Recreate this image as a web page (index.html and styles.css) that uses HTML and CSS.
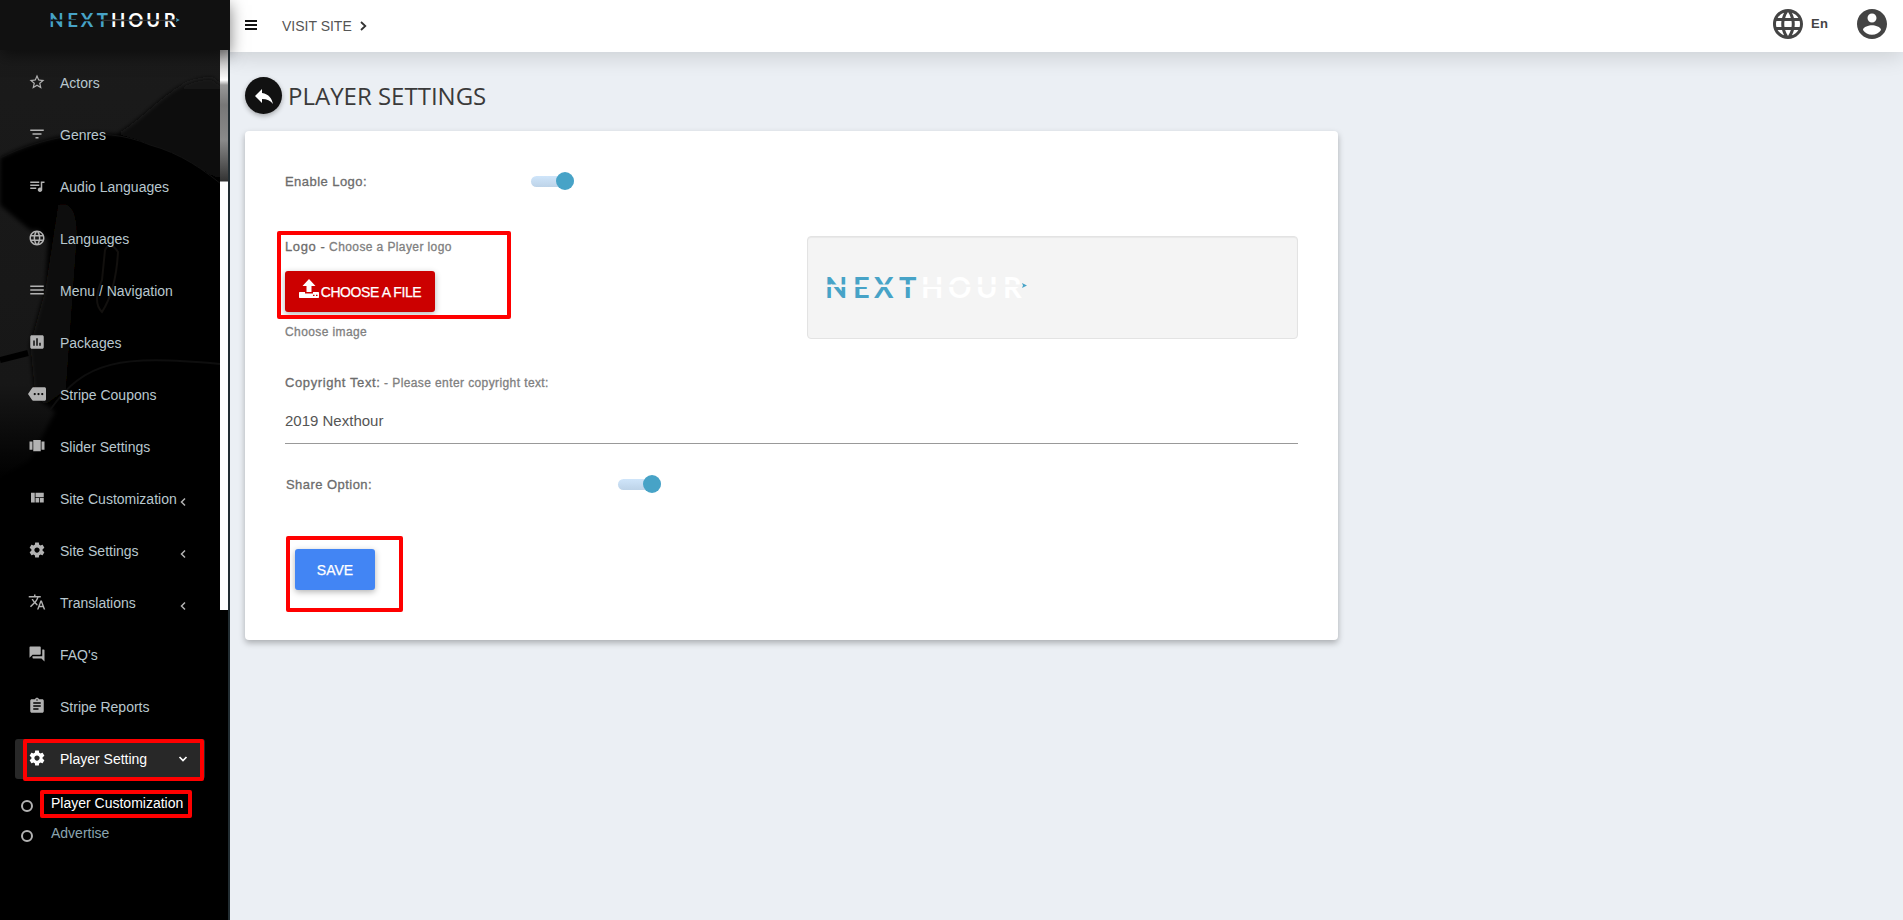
FILE: index.html
```html
<!DOCTYPE html>
<html lang="en">
<head>
<meta charset="utf-8">
<title>Player Settings</title>
<link rel="stylesheet" href="styles.css">
</head>
<body>
<div class="app">
  <aside class="sidebar">
    <svg class="backdrop" viewBox="0 0 228 920" preserveAspectRatio="none">
      <defs>
        <linearGradient id="fade" x1="0" y1="0" x2="0" y2="1"><stop offset="0" stop-color="#1b1b1b"/><stop offset=".8" stop-color="#171717"/><stop offset="1" stop-color="#000"/></linearGradient>
        <linearGradient id="crown" x1="0" y1="0" x2="0" y2="1"><stop offset="0" stop-color="#131313"/><stop offset="1" stop-color="#050505"/></linearGradient>
        <filter id="soft"><feGaussianBlur stdDeviation="2"/></filter>
      </defs>
      <rect width="228" height="920" fill="#000"/>
      <rect width="228" height="480" fill="url(#fade)"/>
      <g filter="url(#soft)">
        <path d="M120 135C155 118 172 78 212 78L240 100V520H0V478L30 460 55 412 35 395 30 345 45 290 48 240 30 222H150Z" fill="#040404"/>
        <path d="M110 138C150 118 170 78 212 78L240 100V190L160 150Z" fill="url(#crown)"/>
        <path d="M0 158C40 138 100 120 150 145C180 153 205 170 228 190V230H30L0 205Z" fill="#040404"/>
        <path d="M58 205C72 200 80 215 76 250L66 390 45 405 35 395 30 345 45 290Z" fill="#090807"/>
      </g>
      <path d="M0 158C40 138 100 123 150 145C180 153 205 170 228 190" fill="none" stroke="#121212"/>
      <path d="M50 410C85 360 120 355 220 364" fill="none" stroke="#0e0e0e" stroke-width="2"/>
      <path d="M105 250Q110 240 118 252Q116 290 102 312Q92 302 102 280Z" fill="none" stroke="#12100e" stroke-width="2"/>
      <path d="M0 360L28 353" stroke="#000" stroke-width="6"/>
    </svg>
    <div class="scrollbar"></div>
    <div class="brand">
      <svg width="135" height="26" viewBox="-4 -6 210 40">
        <g class="logo-text"><text class="blue" x="-2 26 47 72" y="24">NEXT</text><text class="white" x="94 121 149 176" y="24">HOUR</text></g>
        <path d="M0 13H194" stroke="#111" stroke-width="2.4"/><path d="M80 13H194" stroke="#555" stroke-width="1"/>
        <path d="M195 9.500l6 3-6 3 1-3z" fill="#47a3c7"/>
      </svg>
    </div>
    <nav class="menu">
      <a class="item"><svg viewBox="0 0 24 24"><path d="M22 9.24l-7.19-.62L12 2 9.19 8.63 2 9.24l5.46 4.73L5.82 21 12 17.27 18.18 21l-1.63-7.03L22 9.24zM12 15.4l-3.76 2.27 1-4.28-3.32-2.88 4.38-.38L12 6.1l1.71 4.04 4.38.38-3.32 2.88 1 4.28L12 15.4z"/></svg>Actors</a>
      <a class="item"><svg viewBox="0 0 24 24"><path d="M10 18h4v-2h-4v2zM3 6v2h18V6H3zm3 7h12v-2H6v2z"/></svg>Genres</a>
      <a class="item"><svg viewBox="0 0 24 24"><path d="M15 6H3v2h12V6zm0 4H3v2h12v-2zM3 16h8v-2H3v2zM17 6v8.18c-.31-.11-.65-.18-1-.18-1.66 0-3 1.34-3 3s1.340 3 3 3 3-1.340 3-3V8h3V6h-5z"/></svg>Audio Languages</a>
      <a class="item"><svg viewBox="0 0 24 24"><use href="#globe"/></svg>Languages</a>
      <a class="item"><svg viewBox="0 0 24 24"><path d="M3 18h18v-2H3v2zm0-5h18v-2H3v2zm0-7v2h18V6H3z"/></svg>Menu / Navigation</a>
      <a class="item"><svg viewBox="0 0 24 24"><path d="M19 3H5c-1.100 0-2 .9-2 2v14c0 1.100.9 2 2 2h14c1.100 0 2-.9 2-2V5c0-1.100-.9-2-2-2zM9 17H7v-7h2v7zm4 0h-2V7h2v10zm4 0h-2v-4h2v4z"/></svg>Packages</a>
      <a class="item"><svg viewBox="0 0 24 24"><path d="M22 3H7c-.69 0-1.230.35-1.590.88L0 12l5.410 8.110c.36.53.97.89 1.660.89H22c1.100 0 2-.9 2-2V5c0-1.100-.9-2-2-2zM9 13.500c-.83 0-1.500-.67-1.500-1.500s.67-1.500 1.500-1.500 1.500.67 1.500 1.500-.67 1.500-1.500 1.500zm5 0c-.83 0-1.500-.67-1.500-1.500s.67-1.500 1.500-1.500 1.500.67 1.500 1.500-.67 1.500-1.500 1.500zm5 0c-.83 0-1.500-.67-1.500-1.500s.67-1.500 1.500-1.500 1.500.67 1.500 1.500-.67 1.500-1.500 1.500z"/></svg>Stripe Coupons</a>
      <a class="item"><svg viewBox="0 0 24 24"><path d="M7 19h10V4H7v15zm-5-2h4V6H2v11zM18 6v11h4V6h-4z"/></svg>Slider Settings</a>
      <a class="item"><svg viewBox="0 0 24 24"><path d="M10 18h5v-6h-5v6zm-6 0h5V5H4v13zm12 0h5v-6h-5v6zM10 5v6h11V5H10z"/></svg>Site Customization<svg class="arrow" viewBox="0 0 8 10"><path d="M6 1.500L2.500 5 6 8.500"/></svg></a>
      <a class="item"><svg viewBox="0 0 24 24"><use href="#gear"/></svg>Site Settings<svg class="arrow" viewBox="0 0 8 10"><path d="M6 1.500L2.500 5 6 8.500"/></svg></a>
      <a class="item"><svg viewBox="0 0 24 24"><path d="M12.870 15.070l-2.540-2.510.03-.03c1.740-1.940 2.980-4.170 3.710-6.530H17V4h-7V2H8v2H1v1.990h11.170C11.500 7.920 10.440 9.750 9 11.350 8.070 10.320 7.300 9.190 6.690 8h-2c.73 1.630 1.730 3.170 2.980 4.560l-5.090 5.020L4 19l5-5 3.110 3.110.76-2.040zM18.500 10h-2L12 22h2l1.120-3h4.750L21 22h2l-4.500-12zm-2.620 7l1.620-4.330L19.120 17h-3.240z"/></svg>Translations<svg class="arrow" viewBox="0 0 8 10"><path d="M6 1.500L2.500 5 6 8.500"/></svg></a>
      <a class="item"><svg viewBox="0 0 24 24"><path d="M21 6h-2v9H6v2c0 .55.45 1 1 1h11l4 4V7c0-.55-.45-1-1-1zm-4 6V3c0-.55-.45-1-1-1H3c-.55 0-1 .45-1 1v14l4-4h10c.55 0 1-.45 1-1z"/></svg>FAQ's</a>
      <a class="item"><svg viewBox="0 0 24 24"><path d="M19 3h-4.180C14.400 1.840 13.300 1 12 1c-1.300 0-2.400.84-2.820 2H5c-1.100 0-2 .9-2 2v14c0 1.100.9 2 2 2h14c1.100 0 2-.9 2-2V5c0-1.100-.9-2-2-2zm-7 0c.55 0 1 .45 1 1s-.45 1-1 1-1-.45-1-1 .45-1 1-1zm2 14H7v-2h7v2zm3-4H7v-2h10v2zm0-4H7V7h10v2z"/></svg>Stripe Reports</a>
      <a class="item active"><svg viewBox="0 0 24 24"><use href="#gear"/></svg>Player Setting<svg class="arrow down" viewBox="0 0 10 8"><path d="M1.500 2L5 5.500 8.500 2"/></svg></a>
    </nav>
    <div class="submenu">
      <a class="sub current"><i></i>Player Customization</a>
      <a class="sub"><i></i>Advertise</a>
    </div>
    <div class="mark mark-nav"></div>
    <div class="mark mark-sub"></div>
  </aside>

  <div class="page">
    <header class="topbar">
      <svg class="burger" viewBox="0 0 12 10"><path d="M0 1h12M0 5h12M0 9h12"/></svg>
      <a class="visit">VISIT SITE</a>
      <svg class="visit-arrow" viewBox="0 0 7 10"><path d="M1 1l4.300 4L1 9"/></svg>
      <div class="tools">
        <svg class="tool" viewBox="0 0 24 24"><path id="globe" d="M11.990 2C6.470 2 2 6.480 2 12s4.470 10 9.990 10C17.520 22 22 17.520 22 12S17.520 2 11.990 2zm6.930 6h-2.950c-.32-1.250-.78-2.450-1.380-3.560 1.840.63 3.370 1.910 4.330 3.560zM12 4.040c.83 1.200 1.480 2.530 1.910 3.960h-3.820c.43-1.430 1.080-2.760 1.910-3.960zM4.260 14C4.100 13.360 4 12.690 4 12s.1-1.360.26-2h3.380c-.08.66-.14 1.320-.14 2s.06 1.340.14 2H4.260zm.82 2h2.950c.32 1.250.78 2.450 1.380 3.560-1.840-.63-3.370-1.900-4.330-3.560zm2.950-8H5.080c.96-1.660 2.490-2.930 4.330-3.560C8.810 5.550 8.350 6.750 8.030 8zM12 19.960c-.83-1.200-1.480-2.530-1.910-3.960h3.820c-.43 1.430-1.080 2.760-1.910 3.960zM14.340 14H9.660c-.09-.66-.16-1.320-.16-2s.07-1.350.16-2h4.680c.09.65.16 1.320.16 2s-.07 1.340-.16 2zm.25 5.560c.6-1.110 1.060-2.310 1.380-3.560h2.950c-.96 1.650-2.490 2.930-4.330 3.560zM16.360 14c.08-.66.14-1.320.14-2s-.06-1.340-.14-2h3.380c.16.64.26 1.310.26 2s-.1 1.360-.26 2h-3.380z"/></svg>
        <span class="lang">En</span>
        <svg class="tool" viewBox="0 0 24 24"><path d="M12 2C6.480 2 2 6.480 2 12s4.480 10 10 10 10-4.480 10-10S17.520 2 12 2zm0 3c1.660 0 3 1.340 3 3s-1.340 3-3 3-3-1.340-3-3 1.340-3 3-3zm0 14.200c-2.500 0-4.710-1.280-6-3.220.03-1.990 4-3.080 6-3.080 1.990 0 5.970 1.090 6 3.080-1.290 1.940-3.500 3.220-6 3.220z"/></svg>
      </div>
      <svg class="defs" viewBox="0 0 24 24"><defs><path id="gear" d="M19.430 12.980c.04-.32.07-.64.07-.98s-.03-.66-.07-.98l2.110-1.650c.19-.15.24-.42.12-.64l-2-3.460c-.12-.22-.39-.3-.61-.22l-2.490 1c-.52-.4-1.080-.73-1.690-.98l-.38-2.650C14.460 2.180 14.250 2 14 2h-4c-.25 0-.46.18-.49.42l-.38 2.650c-.61.25-1.170.59-1.690.98l-2.490-1c-.23-.09-.49 0-.61.22l-2 3.460c-.13.22-.07.49.12.64l2.110 1.650c-.04.32-.07.65-.07.98s.03.66.07.98l-2.110 1.650c-.19.15-.24.42-.12.64l2 3.460c.12.22.39.3.61.22l2.490-1c.52.4 1.080.73 1.690.98l.38 2.650c.03.24.24.42.49.42h4c.25 0 .46-.18.49-.42l.38-2.650c.61-.25 1.170-.59 1.690-.98l2.490 1c.23.09.49 0 .61-.22l2-3.460c.12-.22.07-.49-.12-.64l-2.110-1.650zM12 15.500c-1.930 0-3.500-1.570-3.500-3.500s1.570-3.500 3.500-3.500 3.500 1.570 3.500 3.500-1.570 3.500-3.500 3.500z"/></defs></svg>
    </header>
    <main>
      <div class="heading">
        <a class="back"><svg viewBox="0 0 24 24"><path d="M10 9V5l-7 7 7 7v-4.100c5 0 8.500 1.600 11 5.100-1-5-4-10-11-11z"/></svg></a>
        <h1>PLAYER SETTINGS</h1>
      </div>
      <section class="card">
        <div class="row enable"><label>Enable Logo:</label><span class="switch"></span></div>
        <div class="row upload">
          <div class="picker">
            <p class="caption"><b>Logo -</b> <small>Choose a Player logo</small></p>
            <button class="btn choose"><svg viewBox="0 0 20 20"><path d="M10 0l6.500 7H12.500v6h-5V7h-4z"/><path d="M.7 13H6v1.500h8V13h5.300q.7 0 .7.700v4.600q0 .7-.7.700H.7q-.7 0-.7-.7v-4.600q0-.7.7-.7z"/><path d="M14 16.300h1.500M17 16.300h1.500" stroke="#c00" stroke-width="1.300"/></svg>CHOOSE A FILE</button>
            <p class="hint">Choose image</p>
          </div>
          <div class="well">
            <svg width="210" height="40" viewBox="-4 -6 210 40">
              <g class="logo-text"><text class="blue" x="-2 26 47 72" y="23">NEXT</text><text class="white" x="94 121 149 176" y="23">HOUR</text></g>
              <path d="M0 10.800H194" stroke="#f4f4f4" stroke-width="2.400"/>
              <path d="M195 8l5 2.500-5 2.500 1-2.500z" fill="#47a3c7"/>
            </svg>
          </div>
        </div>
        <div class="row copyright">
          <p class="caption"><b>Copyright Text:</b> <small>- Please enter copyright text:</small></p>
          <div class="field">2019 Nexthour</div>
        </div>
        <div class="row share"><label>Share Option:</label><span class="switch"></span></div>
        <button class="btn save">SAVE</button>
        <div class="mark mark-upload"></div>
        <div class="mark mark-save"></div>
      </section>
    </main>
  </div>
</div>
</body>
</html>
```
FILE: styles.css
```css
* { box-sizing: border-box; }
body { margin: 0; font-family: "Liberation Sans", Arial, sans-serif; background: #ebeff4; overflow: hidden; }
p, h1 { margin: 0; }
svg { display: block; flex: none; }
.app { display: flex; height: 920px; }

.sidebar { position: relative; width: 230px; flex: none; background: #000; border-right: 2px solid #222d32; }
.backdrop { position: absolute; top: 0; left: 0; width: 228px; height: 920px; }
.scrollbar { position: absolute; left: 220px; top: 50px; width: 8px; height: 560px; background: linear-gradient(#aaa 0, #e8e8e8 22px, #fff 30px, #999 35px, #777 55px, #8a8a8a 90px, #333 131px, #fff 132px); }
.brand { position: relative; width: 230px; height: 50px; padding: 8px 0 0 48px; background: #111; box-shadow: 0 5px 15px rgba(0,0,0,.5); }
.logo-text { font: 700 29px Lato, sans-serif; }
.blue { fill: #47a3c7; }
.white { fill: #fff; }
.menu { position: relative; padding: 6px 23px 0 15px; }
.item { position: relative; display: flex; align-items: center; height: 40px; margin: 7px 0 12px; padding-left: 13px; border-radius: 3px; font-size: 14px; color: #b8c7ce; }
.item > svg { width: 18px; height: 18px; margin: -2px 14px 0 0; fill: #b2b2b2; }
.item > .arrow { position: absolute; left: 164px; top: 18px; width: 8px; height: 10px; margin: 0; fill: none; stroke: #b2b2b2; stroke-width: 1.5; }
.item > .arrow.down { left: 163px; top: 16px; width: 10px; height: 8px; stroke: #fff; stroke-width: 1.7; }
.item.active { background: #282828; color: #fff; }
.item.active > svg { fill: #fff; }
.item.active > .arrow { fill: none; }
.submenu { position: relative; margin-top: -3px; padding-left: 21px; }
.sub { display: flex; align-items: center; height: 30px; font-size: 14px; color: #8aa4af; }
.sub i { width: 12px; height: 12px; margin: 5px 18px 0 0; border: 2px solid #b2b2b2; border-radius: 50%; }
.sub.current { color: #fff; }

.mark { position: absolute; border: 4px solid #f00; border-radius: 2px; }
.mark-nav { left: 23px; top: 739px; width: 181px; height: 42px; }
.mark-sub { left: 40px; top: 790px; width: 152px; height: 28px; }
.mark-upload { left: 32px; top: 100px; width: 234px; height: 88px; }
.mark-save { left: 41px; top: 405px; width: 117px; height: 76px; }

.page { flex: 1; min-width: 0; }
.topbar { display: flex; align-items: center; height: 52px; padding: 0 13px 0 15px; background: #fff; box-shadow: 0 4px 22px rgba(0,0,0,.14); }
.burger { width: 12px; height: 10px; margin-top: -2px; stroke: #111; stroke-width: 2; }
.visit { margin-left: 25px; font-size: 14px; color: #555; }
.visit-arrow { width: 7px; height: 10px; margin-left: 8px; fill: none; stroke: #333; stroke-width: 1.8; }
.tools { display: flex; align-items: center; margin: -4px 0 0 auto; }
.tool { width: 36px; height: 36px; fill: #444; }
.lang { width: 48px; padding-left: 5px; margin-top: -2px; font-size: 13px; font-weight: 700; letter-spacing: .3px; color: #444; }
.defs { width: 0; height: 0; }
main { padding: 25px 15px; }
.heading { display: flex; align-items: center; height: 37px; margin-bottom: 17px; }
.back { display: grid; place-items: center; width: 37px; height: 37px; border-radius: 50%; background: #111; box-shadow: 0 2px 5px rgba(0,0,0,.3); }
.back svg { width: 24px; height: 24px; fill: #fff; }
h1 { margin-left: 6px; font: 400 24px "Open Sans", sans-serif; color: #3a3a3a; }

.card { position: relative; width: 1093px; height: 509px; padding: 30px 40px 0; background: #fff; border-radius: 4px; box-shadow: 0 3px 6px rgba(0,0,0,.28); }
.row label, .caption b, .caption small, .hint { font-weight: 400; color: #6c6c6c; -webkit-text-stroke: .3px currentColor; }
.row label { font-size: 13px; letter-spacing: .45px; }
.enable, .share { display: flex; align-items: center; height: 40px; }
.enable label { width: 246px; }
.share { padding-left: 1px; margin-top: 20px; }
.share label { width: 332px; }
.switch { display: flex; align-items: center; justify-content: flex-end; width: 43px; height: 11px; border-radius: 6px; background: linear-gradient(#cfe5fa, #bdd3e8); }
.switch::after { content: ""; width: 18px; height: 18px; border-radius: 50%; background: #47a3c7; }
.upload { display: flex; justify-content: space-between; height: 138px; padding-top: 35px; }
.caption { height: 20px; line-height: 20px; font-size: 13px; }
.caption b { font-size: 13px; letter-spacing: .6px; }
.caption small, .hint { font-size: 12px; letter-spacing: .4px; color: #808080; }
.picker .caption { margin-top: 1px; }
.btn { display: flex; align-items: center; justify-content: center; height: 41px; padding: 0; border: 0; border-radius: 3px; font: 14px "Liberation Sans", Arial, sans-serif; color: #fff; -webkit-text-stroke: .25px #fff; box-shadow: 0 2px 6px rgba(0,0,0,.3); }
.choose { width: 150px; margin-top: 14px; background: #c00; letter-spacing: -.4px; }
.choose svg { width: 20px; height: 20px; margin: -5px 2px 0 0; fill: #fff; }
.hint { margin-top: 10px; line-height: 20px; }
.well { width: 491px; height: 103px; padding: 32px 15px; background: #f4f4f4; border: 1px solid #e3e3e3; border-radius: 4px; box-shadow: inset 0 1px 1px rgba(0,0,0,.05); }
.copyright { padding-top: 34px; }
.field { height: 51px; padding-top: 19px; line-height: 18px; font-size: 15px; color: #555; border-bottom: 1px solid #999; }
.save { width: 80px; margin: 45px 0 0 10px; background: #4285f4; }
```
